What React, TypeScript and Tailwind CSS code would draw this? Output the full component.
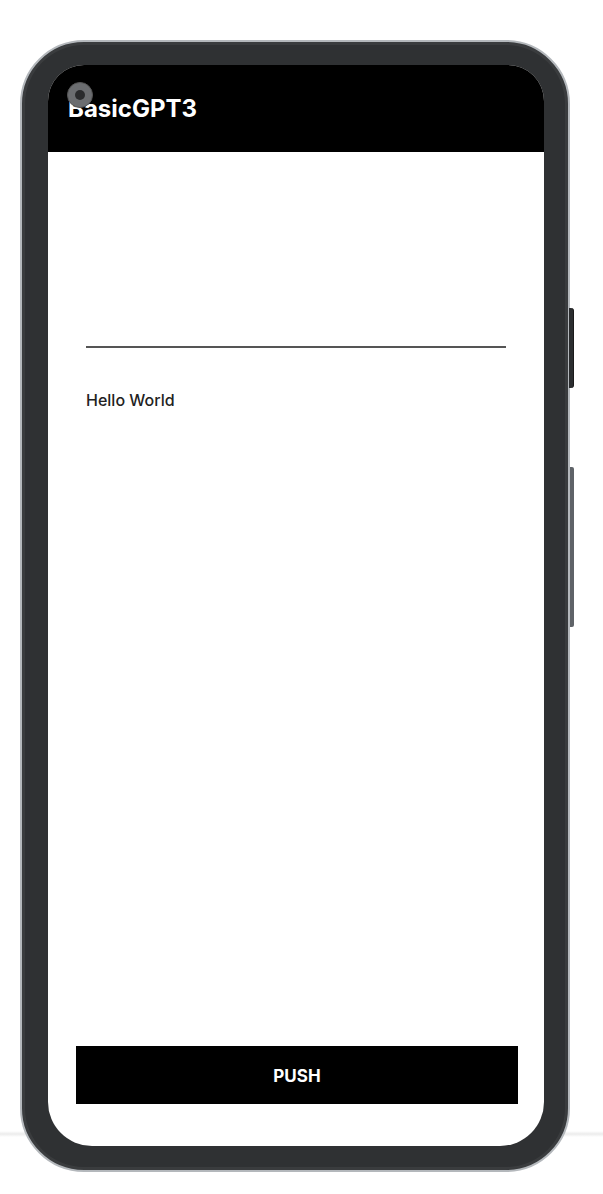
export default function App() {
  return (
    <div className="relative w-[603px] h-[1194px] bg-white overflow-hidden">
      {/* faint floor shadow behind the phone */}
      <div className="absolute left-0 right-0 top-[1131px] h-[6px] bg-gradient-to-b from-white via-[#ececec] to-white" />

      <div className="relative ml-[20px] mt-[40px] w-[550px] h-[1132px] rounded-[64px] border-2 border-[#b4b8bc] bg-[#2f3133] pt-[23px] pb-[24px] pl-[26px] pr-[24px] shadow-[inset_0_0_0_3px_#3a3c3e]">
        {/* side buttons */}
        <div className="absolute -right-[6px] top-[266px] w-[5px] h-[80px] rounded-r-[3px] bg-[#2b2d2f] border-r border-[#1a1a1a]" />
        <div className="absolute -right-[6px] top-[425px] w-[4px] h-[160px] rounded-r-[2px] bg-[#5f6368]" />

        {/* screen */}
        <div className="relative flex flex-col h-full bg-white rounded-t-[36px] rounded-b-[44px] overflow-hidden">
          <div className="flex items-end h-[87px] shrink-0 bg-black pl-[20px] pb-[31px]">
            <span className="text-white text-[24px] leading-none font-bold font-['Inter',sans-serif]">
              BasicGPT3
            </span>
          </div>

          <div className="flex flex-col flex-1 px-[38px]">
            <div className="mt-[194px] h-[1.5px] bg-[#555]" />
            <p className="mt-[44px] text-[16px] leading-none font-medium text-[#222] font-['Inter',sans-serif]">
              Hello World
            </p>
          </div>

          <div className="pl-[28px] pr-[26px] pb-[42px]">
            <button className="flex items-center justify-center w-full h-[58px] pt-[4px] bg-black text-white text-[17px] font-bold font-['Inter',sans-serif]">
              PUSH
            </button>
          </div>

          {/* camera */}
          <div className="absolute left-[19px] top-[17px] flex items-center justify-center w-[26px] h-[26px] rounded-full bg-[#6b6d70] border border-[#555]">
            <div className="w-[10px] h-[10px] rounded-full bg-[#2a2b2d]" />
          </div>
        </div>
      </div>
    </div>
  );
}
